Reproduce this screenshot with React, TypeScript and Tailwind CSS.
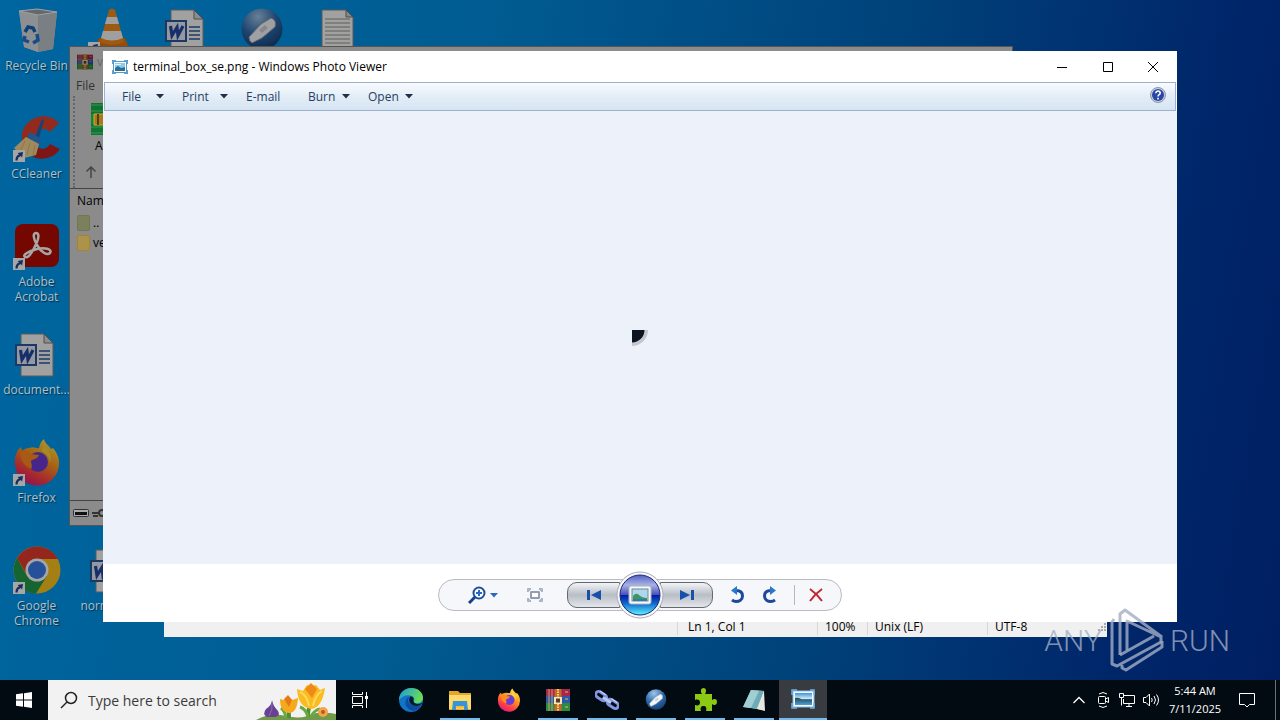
import type { ReactNode } from 'react';

const ShortcutBadge = () => (
  <svg viewBox="0 0 12 12" className="absolute bottom-0 left-0 size-3">
    <rect width="12" height="12" fill="#fff" />
    <path d="M2.5 10.5C2.3 7.5 3.6 5.4 6 4.6L4.6 3.1 10 2l-.9 5.4-1.4-1.3C5.7 6.8 4.8 8.2 4.6 10.5z" fill="#21478f" />
  </svg>
);

const DesktopIcon = ({ name, label, place, shortcut, children }: { name?: string; label?: string; place: string; shortcut?: boolean; children: ReactNode }) => (
  <button aria-label={name} className={`${place} flex flex-col items-center gap-1 pt-1.5 pr-0.5`}>
    <span className="relative block size-12 brightness-[0.65]">
      {children}
      {shortcut && <ShortcutBadge />}
    </span>
    {label && <span className="w-[70px] text-center text-[12px] leading-[15px] text-[#adc0cc] [text-shadow:1px_1px_1px_#00304a]">{label}</span>}
  </button>
);

const RecycleBin = () => (
  <svg viewBox="0 0 48 48" className="size-12">
    <path d="M6 5l18-2 20 3-4 37-15 3-14-5z" fill="#cfd4da" />
    <path d="M6 5l19 4v37l-14-5z" fill="#d9dde2" />
    <path d="M25 9l19-3-4 37-15 3z" fill="#bcc3ca" />
    <path d="M6 5l18-2 20 3-19 3z" fill="#9aa2aa" stroke="#f4f6f8" />
    <path d="M12 26l3-5 5 1 2 4" fill="none" stroke="#1763b5" strokeWidth="3.500" />
    <path d="M24 28l1 6-5 3M16 36l-5-2 1-4" fill="none" stroke="#2377cf" strokeWidth="3.500" />
  </svg>
);

const VlcCone = () => (
  <svg viewBox="0 0 48 48" className="size-12">
    <path d="M11 32h26l4 10H7z" fill="#e87404" />
    <path d="M21 4q3-3 6 0l9 32q-12 6-24 0z" fill="#f28a1c" />
    <path d="M19 11h10l2 7H17zM15 25h18l2 7q-11 5-22 0z" fill="#f4f4f4" />
  </svg>
);

const WordDoc = () => (
  <svg viewBox="2 -2 48 48" className="size-12">
    <path d="M10 2h23l9 9v33H10z" fill="#f8f8f8" stroke="#8b8b8b" />
    <path d="M33 2v9h9z" fill="#d8d8d8" stroke="#777" />
    <path d="M28 19h11M28 23h11M28 27h11M28 31h11" stroke="#2b579a" strokeWidth="1.5" />
    <rect x="5" y="13" width="20" height="20" fill="#e4ebf7" stroke="#2b579a" strokeWidth="2" />
    <path d="M9.500 18l1.500 9.500 5-8 1 8 5-9.500" fill="none" stroke="#2447a0" strokeWidth="3.200" />
  </svg>
);

const UsbDisc = ({ className }: { className: string }) => (
  <svg viewBox="0 0 48 48" className={className}>
    <defs>
      <radialGradient id="disc" cx=".4" cy=".2" r=".9">
        <stop offset="0" stopColor="#9fc4e8" />
        <stop offset=".5" stopColor="#2d6aac" />
        <stop offset="1" stopColor="#123869" />
      </radialGradient>
    </defs>
    <circle cx="24" cy="23" r="20.500" fill="url(#disc)" />
    <path d="M11 31l12-13 10-6q6 2 4 9L24 32l-10 5q-3-2-3-6z" fill="#f4f6f8" stroke="#8a98aa" />
    <path d="M21 24l6-5 3 3-6 5z" fill="#ccd3dc" />
  </svg>
);

const TextDoc = () => (
  <svg viewBox="0 -1 48 48" className="size-12">
    <path d="M9 3h24l7 7v35H9z" fill="#f8f8f6" stroke="#888" />
    <path d="M33 3v7h7z" fill="#d0d0d0" stroke="#777" />
    <path d="M12 12h25M12 16h25M12 20h25M12 24h25M12 28h25M12 32h25M12 36h25" stroke="#8f8f8f" />
  </svg>
);

const CCleaner = () => (
  <svg viewBox="0 0 48 48" className="size-12">
    <path d="M46 9C36-2 18 1 11 14c-4 8-2 14 1 20l12-2c-4-6-3-13 3-16 4-2 7-1 10 2z" fill="#e1402c" />
    <path d="M20 43c10 4 21 1 27-8l-10-5c-3 5-8 6-13 3z" fill="#c42222" />
    <path d="M29 5l2 1-5 18-4-1z" fill="#1f66bb" />
    <path d="M17 18l12 7-3 5-12-6z" fill="#2f83d6" />
    <path d="M13 23l13 7-3 11-12 3L1 34z" fill="#f5d492" />
    <path d="M12 27l-5 10M17 29l-3 12M22 31l-2 11" stroke="#dfb46b" />
  </svg>
);

const Acrobat = () => (
  <svg viewBox="0 0 48 48" className="size-12">
    <rect x="2" y="2" width="44" height="43" rx="8" fill="#b30b00" />
    <path d="M23 11c-4 0-2 7 1 12 4 7 10 11 13 8 3-4-6-6-13-4-8 2-15 6-12 8 4 2 9-8 12-15 2-5 2-9-1-9z" fill="none" stroke="#fff" strokeWidth="2.500" />
  </svg>
);

const FirefoxLogo = ({ className }: { className: string }) => (
  <svg viewBox="0 0 48 48" className={className}>
    <defs>
      <linearGradient id="fox" x1=".8" y1="0" x2=".25" y2="1">
        <stop offset="0" stopColor="#fff04a" />
        <stop offset=".4" stopColor="#ff9a1e" />
        <stop offset=".75" stopColor="#ff3d48" />
        <stop offset="1" stopColor="#e3157f" />
      </linearGradient>
    </defs>
    <path d="M31 1c1 5 5 6 7 10l2-1c4 5 6 9 6 15a22 22 0 0 1-44 1C1 18 4 12 8 9l1 4c2-2 4-3 7-3 5-2 7 1 10 0 1-4 2-7 5-9z" fill="url(#fox)" />
    <circle cx="25" cy="24" r="10" fill="#6b3bd6" />
    <path d="M7 13c6-2 9 1 10 3l9 1c-1 4-6 4-8 6 0 3 2 5 0 8-8-4-11-10-11-18z" fill="#ff8a1f" />
    <path d="M32 8c5 6 7 11 5 17 0-7-4-9-8-12 0-2 1-4 3-5z" fill="#ffd53c" />
  </svg>
);

const ChromeLogo = () => (
  <svg viewBox="0 0 48 48" className="size-12">
    <circle cx="24" cy="24" r="23.500" fill="#fcc31e" />
    <path d="M4 12A23.500 23.500 0 0 1 45 13H24L14 29z" fill="#e33b2e" />
    <path d="M4 12a23.500 23.500 0 0 0 19 35.500L34 30H14z" fill="#229a48" />
    <circle cx="24" cy="24" r="11.500" fill="#fff" />
    <circle cx="24" cy="24" r="9" fill="#3b7ded" />
  </svg>
);

const WinrarLogo = ({ className }: { className: string }) => (
  <svg viewBox="0 0 24 24" className={className}>
    <path d="M0 1h24v7H0z" fill="#a8254c" />
    <path d="M0 8h24v7H0z" fill="#3158a8" />
    <path d="M0 15h24v8H0z" fill="#2c8a42" />
    <path d="M3 1v22M6 1v22" stroke="#c9a56c" />
    <path d="M8.500 1h7v22h-7z" fill="#c8692b" />
    <path d="M8 9h8v7H8z" fill="#f3e6ba" />
    <path d="M10 10.500h4v4h-4z" fill="#5b3a24" />
    <path d="M12 1v8M12 16v7" stroke="#f4d66c" strokeWidth="2" strokeDasharray="1.500 1" />
    <path d="M19 4h3M19 11h3M19 19h3" stroke="#e4bb5d" />
  </svg>
);

const PictureIcon = ({ className }: { className: string }) => (
  <svg viewBox="0 0 16 14" className={className}>
    <rect x="1.500" y="1.500" width="13" height="11" fill="#fff" stroke="#5896c8" />
    <rect x="3" y="3" width="10" height="8" fill="#8ccbee" />
    <path d="M3 8l3-2 3 2 4-1v4H3z" fill="#287093" />
    <path d="M3 4h6v1H3z" fill="#dff3fc" />
    <path d="M0 4V0h4M12 0h4v4M16 10v4h-4M4 14H0v-4" fill="none" stroke="#3985c1" strokeWidth="1.500" />
  </svg>
);

const PhotoLogo = () => (
  <svg viewBox="0 0 24 24" className="size-6">
    <defs>
      <linearGradient id="sea" x1="0" y1="0" x2="0" y2="1">
        <stop offset="0" stopColor="#3d94d6" />
        <stop offset=".5" stopColor="#d8effa" />
        <stop offset=".55" stopColor="#28597a" />
        <stop offset="1" stopColor="#4da3cf" />
      </linearGradient>
    </defs>
    <path d="M2 3h21v16H2z" fill="#f2f8fc" stroke="#8bbfe4" />
    <path d="M4 5h17v12H4z" fill="url(#sea)" />
    <path d="M4 10q4-1 7 1.500H4z" fill="#2c5140" />
    <path d="M1 7V2h5M19 2h4v5M23 15v5h-4M6 20H1v-5" fill="none" stroke="#70b3e4" strokeWidth="1.500" />
  </svg>
);

const Caret = () => (
  <svg viewBox="0 0 8 5" className="h-[5px] w-2">
    <path d="M0 0h8L4 4.500z" fill="#1e2f4a" />
  </svg>
);

const menus = [
  { label: 'File', width: 'w-[60px]', caret: true },
  { label: 'Print', width: 'w-[64px]', caret: true },
  { label: 'E-mail', width: 'w-[62px]', caret: false },
  { label: 'Burn', width: 'w-[60px]', caret: true },
  { label: 'Open', width: 'w-[63px]', caret: true },
];

const ArchiveWindow = () => (
  <section className="absolute top-[46px] right-[267px] left-[69px] flex h-[480px] flex-col border border-[#555] bg-[#8b8b8b] text-[12px] text-black">
    <header className="flex h-[29px] items-center gap-1 px-[7px] text-[#666]">
      <WinrarLogo className="size-4 brightness-[0.6]" />
      <span>v</span>
    </header>
    <div className="flex h-5 items-center px-1.5 text-[#333]">
      <button>File</button>
    </div>
    <div className="ml-[3px] flex h-[92px] flex-col border-l-2 border-dotted border-[#666] pt-1.5 pl-4">
      <svg viewBox="0 0 32 34" className="h-[34px] w-8 shrink-0">
        <path d="M0 1h28v11H0z" fill="#117032" />
        <path d="M0 12h28v10H0z" fill="#0b8b37" />
        <path d="M0 22h28v11H0z" fill="#127533" />
        <path d="M0 3h28M0 9h28M0 25h28M0 31h28" stroke="#2c9e4c" />
        <path d="M3 12h10v11H3z" fill="#a67a1d" stroke="#d6a837" />
        <path d="M7 12v11" stroke="#533d0d" strokeWidth="2" />
      </svg>
      <span className="pl-1 leading-5">A</span>
      <svg viewBox="0 0 12 12" className="mt-2.5 -ml-1.5 size-3 shrink-0">
        <path d="M6 12V1M1.500 5.500L6 1l4.500 4.500" fill="none" stroke="#444" strokeWidth="1.500" />
      </svg>
    </div>
    <div className="flex-1 border-y border-[#444]">
      <table className="text-left leading-5">
        <thead>
          <tr><th className="h-6 px-[7px] font-normal">Name</th></tr>
        </thead>
        <tbody>
          <tr><td className="flex items-center gap-[3px] px-[7px]"><span className="h-4 w-[13px] rounded-xs border border-[#737650] bg-[#7d805c]" />..</td></tr>
          <tr><td className="flex items-center gap-[3px] px-[7px]"><span className="h-4 w-[13px] rounded-xs border border-[#a28434] bg-[#ad924b]" />ve</td></tr>
        </tbody>
      </table>
    </div>
    <footer className="flex h-6 items-center gap-1 px-[3px]">
      <svg viewBox="0 0 34 10" className="h-2.5 w-[34px]">
        <rect x=".5" y="1.500" width="15" height="7" rx="1" fill="#aaa" stroke="#333" />
        <path d="M2 4h12v3H2z" fill="#111" />
        <path d="M19 5h8M20 8h5" stroke="#333" strokeWidth="2" />
        <circle cx="29" cy="5" r="3" fill="none" stroke="#333" strokeWidth="2" />
      </svg>
    </footer>
  </section>
);

const NotepadWindow = () => (
  <section className="absolute right-[173px] bottom-[43px] left-[164px] flex h-[200px] flex-col justify-end bg-[#f0f0f0] text-[12px] text-black">
    <footer className="flex h-5 items-center justify-end leading-4">
      <span className="h-4 w-[140px] border-l border-[#d7d7d7] pl-2.5">Ln 1, Col 1</span>
      <span className="h-4 w-[50px] border-l border-[#d7d7d7] pl-[7px]">100%</span>
      <span className="h-4 w-[120px] border-l border-[#d7d7d7] pl-[7px]">Unix (LF)</span>
      <span className="flex h-4 w-[120px] items-center justify-between border-l border-[#d7d7d7] pl-[7px]">
        UTF-8
        <svg viewBox="0 0 10 10" className="size-2.5">
          <path d="M8 1v9M5 4v6M2 7v3" stroke="#aaa" strokeWidth="2" strokeDasharray="2 1" />
        </svg>
      </span>
    </footer>
  </section>
);

const ViewerControls = () => (
  <div className="flex h-[58px] items-center justify-center bg-white pt-1">
    <div className="flex h-8 w-[404px] items-center rounded-full border border-[#b9bbc0] bg-[#f5f7fa]">
      <button aria-label="Zoom" className="ml-[29px] flex w-[30px] items-center gap-1">
        <svg viewBox="0 0 18 18" className="size-[18px]">
          <circle cx="11" cy="7" r="5.500" fill="#fff" stroke="#1f4e9f" strokeWidth="2" />
          <path d="M11 4v6M8 7h6" stroke="#2469bd" strokeWidth="2" />
          <path d="M7 11l-6 6" stroke="#1b3f85" strokeWidth="3" />
        </svg>
        <svg viewBox="0 0 8 5" className="h-[5px] w-2"><path d="M0 0h8L4 4.500z" fill="#2e68b5" /></svg>
      </button>
      <button aria-label="Fit to window" className="ml-[29px]">
        <svg viewBox="0 0 16 14" className="h-3.5 w-4">
          <path d="M1 4V1h3M12 1h3v3M15 10v3h-3M4 13H1v-3" fill="none" stroke="#929eb2" strokeWidth="1.500" />
          <rect x="4" y="4" width="8" height="6" fill="#fff" stroke="#929eb2" strokeWidth="2" />
          <path d="M1 1l3 3M15 1l-3 3M1 13l3-3M15 13l-3-3" stroke="#b2bccb" />
        </svg>
      </button>
      <div className="ml-6 flex items-center">
        <button aria-label="Previous" className="-mr-1 flex h-[26px] w-[53px] items-center justify-center rounded-l-[10px] border border-[#65686e] bg-linear-to-b from-[#f2f4f7] from-0% via-[#b9bec6] via-50% to-[#e3e6ea]">
          <svg viewBox="0 0 16 12" className="h-3 w-4"><path d="M1 1h3v10H1zM15 1v10L5 6z" fill="#1751ab" /></svg>
        </button>
        <button aria-label="Play slide show" className="relative -my-2">
          <svg viewBox="0 0 48 48" className="size-12">
            <defs>
              <linearGradient id="orb" x1="0" y1="0" x2="0" y2="1">
                <stop offset="0" stopColor="#5260c4" />
                <stop offset=".25" stopColor="#a8b2e6" />
                <stop offset=".49" stopColor="#4651bb" />
                <stop offset=".5" stopColor="#0716a0" />
                <stop offset=".7" stopColor="#0965cc" />
                <stop offset="1" stopColor="#63f3ff" />
              </linearGradient>
            </defs>
            <circle cx="24" cy="24" r="23" fill="#f8f8fc" stroke="#a9abb6" />
            <circle cx="24" cy="24" r="20" fill="url(#orb)" stroke="#1d2878" />
            <rect x="13" y="15" width="22" height="18" rx="2" fill="#f7f7f4" stroke="#aeb4c2" />
            <rect x="16" y="18" width="16" height="12" fill="#aad8ee" stroke="#72889c" />
            <path d="M17 25q3-4 6-1t8 3v2H17z" fill="#42945a" />
            <path d="M17 28h14v2H17z" fill="#2e7caa" />
          </svg>
        </button>
        <button aria-label="Next" className="-ml-1 flex h-[26px] w-[53px] items-center justify-center rounded-r-[10px] border border-[#65686e] bg-linear-to-b from-[#f2f4f7] from-0% via-[#b9bec6] via-50% to-[#e3e6ea]">
          <svg viewBox="0 0 16 12" className="h-3 w-4"><path d="M12 1h3v10h-3zM1 1v10l10-5z" fill="#1751ab" /></svg>
        </button>
      </div>
      <button aria-label="Rotate counterclockwise" className="ml-4">
        <svg viewBox="0 0 16 18" className="h-[18px] w-4">
          <path d="M7 4.500c4 0 6.500 1.500 6.500 5.500S10 15.500 7 15.500q-2 0-4-1.500" fill="none" stroke="#1d489b" strokeWidth="3" />
          <path d="M8 0v9L2 4.500z" fill="#2b77ca" />
        </svg>
      </button>
      <button aria-label="Rotate clockwise" className="ml-[17px]">
        <svg viewBox="0 0 16 18" className="h-[18px] w-4">
          <path d="M9 4.500c-4 0-6.500 1.500-6.500 5.500S6 15.500 9 15.500q2 0 4-1.500" fill="none" stroke="#1d489b" strokeWidth="3" />
          <path d="M8 0v9l6-4.500z" fill="#2b77ca" />
        </svg>
      </button>
      <span className="ml-4 h-5 w-px bg-[#b5b8be]" />
      <button aria-label="Delete" className="ml-3.5">
        <svg viewBox="0 0 14 14" className="size-3.5"><path d="M1 1q7 5 12 12M13 1Q6 6 1 13" fill="none" stroke="#c0272d" strokeWidth="2" /></svg>
      </button>
    </div>
  </div>
);

const PhotoViewer = () => (
  <section className="absolute inset-x-[103px] top-[51px] bottom-[58px] flex flex-col bg-white text-black">
    <header className="flex h-[31px] shrink-0 items-center pl-[9px]">
      <PictureIcon className="h-3.5 w-4" />
      <h1 className="ml-[5px] flex-1 text-[12px]">terminal_box_se.png - Windows Photo Viewer</h1>
      <button aria-label="Minimize" className="flex w-[46px] justify-center"><svg viewBox="0 0 10 10" className="size-2.5"><path d="M0 5.500h10" stroke="#000" /></svg></button>
      <button aria-label="Maximize" className="flex w-[45px] justify-center"><svg viewBox="0 0 10 10" className="size-2.5"><path d="M.5.5h9v9h-9z" fill="none" stroke="#000" /></svg></button>
      <button aria-label="Close" className="mr-px flex w-[46px] justify-center"><svg viewBox="0 0 10 10" className="size-2.5"><path d="M0 0l10 10M10 0L0 10" stroke="#000" /></svg></button>
    </header>
    <nav className="mx-px flex h-[29px] shrink-0 items-center border border-[#9db0cc] bg-linear-to-b from-[#f8fbfe] from-0% via-[#e3edf7] via-50% to-[#d6e5f3] pl-[9px] text-[12px] text-[#27405f]">
      {menus.map((m) => (
        <button key={m.label} className={`${m.width} flex items-center justify-between pr-2.5 pl-2`}>
          {m.label}
          {m.caret && <Caret />}
        </button>
      ))}
      <button aria-label="Help" className="mr-[9px] mb-1 ml-auto">
        <svg viewBox="0 0 16 16" className="size-4">
          <circle cx="8" cy="8" r="7.500" fill="#c8cfdf" stroke="#8b95ad" />
          <circle cx="8" cy="8" r="6" fill="#2947a6" />
          <path d="M5.800 6.200c0-3 4.600-2.800 4.400-.1C10.100 7.700 8 7.500 8 9.400M8 10.800v1.600" fill="none" stroke="#fff" strokeWidth="1.600" />
        </svg>
      </button>
    </nav>
    <div className="flex flex-1 items-center justify-center bg-[#edf1f9]">
      <svg viewBox="0 0 16 16" className="size-4">
        <path d="M0 0h16A16 16 0 0 1 0 16z" fill="#c3c7ce" />
        <path d="M0 0h12.500A12.500 12.500 0 0 1 0 12.500z" fill="#0b1420" />
      </svg>
    </div>
    <ViewerControls />
  </section>
);

const Watermark = () => (
  <div className="absolute right-[50px] bottom-2 flex h-16 items-center gap-[3px] font-['Roboto','Liberation_Sans',sans-serif] text-[30px] font-light text-[#a3aec5]/80">
    <span>ANY</span>
    <svg viewBox="0 0 62 64" className="h-16 w-[62px]" fill="none" stroke="currentColor" strokeWidth="3" strokeLinejoin="round">
      <path d="M15 47V6l5-4 37 27M9 11l-2 3v42l5 2 44-24v-5L22 13v29" />
      <path d="M15 47l34-19M17 57v3l4 2 36-23v-6" />
    </svg>
    <span>RUN</span>
  </div>
);

const Flowers = () => (
  <svg viewBox="0 0 80 40" className="h-10 w-20 shrink-0">
    <path d="M0 40Q14 32 30 36t30-3q12-1 20 1v6z" fill="#719a4b" />
    <path d="M16 20q1 6 6 11 3 5-3 6h-8q-5-3-1-8 6-4 6-9z" fill="#674293" />
    <path d="M16 22q1 8-3 14" stroke="#8d6ab5" fill="none" />
    <path d="M33 38q0-8-2-10M52 37q0-8 2-11" stroke="#4e8e38" strokeWidth="4" fill="none" />
    <path d="M30 38q-1-7-5-10M52 37Q50 29 44 27M55 36q5-7 9-7" stroke="#6ba83e" strokeWidth="3" fill="none" />
    <path d="M24 19l4 1 4-4 4 4 6-2q-1 15-9 15-9-1-9-14z" fill="#f6a91c" />
    <path d="M28 19l4-4 4 5-3 7z" fill="#e87a16" />
    <path d="M41 9l6 2 4-6 5 1 4-1 4 5 5-2q-3 20-14 21Q42 27 41 9z" fill="#fbbb20" />
    <path d="M49 9l6-6 6 6-5 9z" fill="#ef8a16" />
    <path d="M44 12q7 3 9 14M66 11q-7 4-9 15" stroke="#fddb5d" strokeWidth="2" fill="none" />
    <circle cx="67" cy="32" r="5" fill="#f3a54a" /><circle cx="67" cy="32" r="2" fill="#b85c1d" />
  </svg>
);

const EdgeLogo = () => (
  <svg viewBox="0 0 24 24" className="size-6">
    <defs>
      <linearGradient id="edge" x1="0" y1="0" x2="1" y2=".3">
        <stop offset="0" stopColor="#1a9bdc" /><stop offset="1" stopColor="#67dc58" />
      </linearGradient>
    </defs>
    <circle cx="12" cy="12" r="12" fill="#1174c9" />
    <path d="M0 12C0 4 7 0 12 0c8 0 12 5 12 10 0 4-4 6-8 5-3-1 0-2-1-5-2-4-11-4-15 2z" fill="url(#edge)" />
    <path d="M8 10c-4 6 0 12 7 13 3-1 6-3 8-7-6 3-14 1-14-4 0-1 0-2 2-3-1 0-2 0-3 1z" fill="#0c4da0" />
    <path d="M11 9c-3 5 2 9 7 9l5-2c1 0 1 0 .500-1-5 2-10 1-9-4 0-2-2-3-3.500-2z" fill="#061a29" />
  </svg>
);

const ExplorerLogo = () => (
  <svg viewBox="0 0 24 24" className="size-6">
    <path d="M1 3h9l2 2h11v17H1z" fill="#e5a42e" />
    <path d="M1 7h22v14H1z" fill="#ffd96a" />
    <path d="M5 13h14l1 9h-4v-4H8v4H4z" fill="#3994d5" />
    <path d="M8 18h8v2h-3v2h-2v-2H8z" fill="#f6bd3a" />
  </svg>
);

const ChainLogo = () => (
  <svg viewBox="0 0 24 24" className="size-6" fill="none">
    <g transform="rotate(34 12 12)">
      <rect x="-1" y="9" width="12" height="6" rx="3" stroke="#7f96e0" strokeWidth="3" />
      <rect x="13" y="9" width="12" height="6" rx="3" stroke="#7f96e0" strokeWidth="3" />
      <path d="M7 12h10" stroke="#b8c7f7" strokeWidth="3" />
      <path d="M1 8.500h7M15 8.500h7" stroke="#ced9ff" />
    </g>
  </svg>
);

const PuzzleLogo = () => (
  <svg viewBox="0 0 24 24" className="size-6">
    <path d="M2 6h7c-2-3-1-6 1.500-6S14 3 12 6h7v6c3-2 5-1 5 2s-3 4-5 2v7h-6c1-3 0-5-2.500-5S7 20 8 23H2v-6c3 1 5 0 5-2.500S5 11 2 12z" fill="#8cc914" />
  </svg>
);

const NotepadLogo = () => (
  <svg viewBox="0 0 24 24" className="size-6">
    <path d="M9 2l13 1-1 19-17-3z" fill="#bae1e5" />
    <path d="M9 2l13 1-7 18-14-2z" fill="#6eabb6" />
    <path d="M9 2l8 1-8 17-8-1z" fill="#a1ced3" />
    <path d="M22 3l1 20-8-2z" fill="#e7e7df" />
  </svg>
);

const tasks = [
  { name: 'Edge', icon: <EdgeLogo />, open: false },
  { name: 'File Explorer', icon: <ExplorerLogo />, open: true },
  { name: 'Firefox', icon: <FirefoxLogo className="size-6" />, open: false },
  { name: 'WinRAR', icon: <WinrarLogo className="size-6" />, open: true },
  { name: 'Links', icon: <ChainLogo />, open: true },
  { name: 'USB tool', icon: <UsbDisc className="size-6" />, open: true },
  { name: 'Extension', icon: <PuzzleLogo />, open: true },
  { name: 'Notepad', icon: <NotepadLogo />, open: true },
];

const Taskbar = () => (
  <footer className="flex h-10 shrink-0 items-stretch bg-[#030b12] text-white">
    <button aria-label="Start" className="flex w-12 items-center justify-center">
      <svg viewBox="0 0 16 16" className="size-4"><path d="M0 2.300l7-1v6.200H0zM8 1.200L16 0v7.500H8zM0 8.500h7v6.200l-7-1zM8 8.500h8V16l-8-1.200z" fill="#fff" /></svg>
    </button>
    <label className="flex w-72 items-center bg-[#f2f2f2] pl-3">
      <svg viewBox="0 0 18 18" className="size-[18px] shrink-0"><path d="M1 17l6-6" stroke="#222" strokeWidth="1.500" /><circle cx="11" cy="7" r="5.500" fill="none" stroke="#222" strokeWidth="1.500" /></svg>
      <input aria-label="Search" placeholder="Type here to search" className="ml-2.5 min-w-0 flex-1 bg-transparent text-[14px] outline-none placeholder:text-[#3b3b3b]" />
      <Flowers />
    </label>
    <button aria-label="Task view" className="mr-[3px] flex w-12 items-center justify-center">
      <svg viewBox="0 0 16 16" className="size-4" fill="none" stroke="#fff"><path d="M.5 0v2.500h10V0M.5 16v-2.500h10V16M.5 4.500h10v7H.5zM14.500 0v16" /><path d="M13 4h3v3h-3z" fill="#fff" stroke="none" /></svg>
    </button>
    <div className="flex gap-px">
      {tasks.map((t) => (
        <button key={t.name} aria-label={t.name} className="flex w-12 flex-col items-center justify-between pt-2">
          {t.icon}
          {t.open && <span className="h-0.5 w-10 bg-[#76b9ed]" />}
        </button>
      ))}
      <button aria-label="Photo Viewer" className="flex w-12 flex-col items-center justify-between bg-[#383b40] pt-2">
        <PhotoLogo />
        <span className="h-0.5 w-12 bg-[#76b9ed]" />
      </button>
    </div>
    <div className="ml-auto flex items-center">
      <div className="flex items-center gap-1.5">
        <button aria-label="Show hidden icons" className="flex w-[18px] justify-center"><svg viewBox="0 0 12 8" className="h-2 w-3"><path d="M.5 7L6 1.500 11.500 7" fill="none" stroke="#fff" strokeWidth="1.300" /></svg></button>
        <button aria-label="Meet now"><svg viewBox="0 0 18 18" className="size-[18px]" fill="none" stroke="#fff"><rect x="4.500" y="5.500" width="7" height="7" rx="1" /><path d="M11.500 8l3-1.500v5l-3-1.500M5 3q4-3 8 0M5 15q4 3 8 0" /></svg></button>
        <button aria-label="Network"><svg viewBox="0 0 18 18" className="size-[18px]" fill="none" stroke="#fff"><path d="M6 4.500h10.500v8h-11V8M1.500 2.500h4v4h-4zM3.500 7v7.500M8 15.500h6M11 13v2" /></svg></button>
        <button aria-label="Volume"><svg viewBox="0 0 18 18" className="size-[18px]" fill="none" stroke="#fff"><path d="M1.500 6.500H4L7.500 3v12L4 11.500H1.500zM9.500 7q1.500 2 0 4M12 5q3 4 0 8M14.500 3.500q4 5.500 0 11" /></svg></button>
      </div>
      <time className="w-[70px] text-center text-[11px] leading-[18px]">5:44 AM<br />7/11/2025</time>
      <button aria-label="Notifications" className="ml-2 flex w-[18px] justify-center"><svg viewBox="0 0 18 18" className="size-[18px]"><path d="M1.500 2.500h15v11h-5L9 16l-2.500-2.500h-5z" fill="none" stroke="#fff" /></svg></button>
      <span className="mr-1 ml-[19px] h-10 w-px bg-[#68717a]" />
    </div>
  </footer>
);

const App = () => (
  <div className="flex min-h-screen flex-col overflow-hidden bg-[#003a72] font-['Open_Sans','Noto_Sans',sans-serif]">
    <main className="relative min-h-[600px] flex-1 overflow-hidden bg-[linear-gradient(100deg,#0066a0_0%,#005c92_35%,#00427a_65%,#00266a_88%,#001f62_100%)]">
      <div className="grid auto-cols-[75px] grid-rows-[repeat(6,108px)]">
        <DesktopIcon label="Recycle Bin" place="col-start-1 row-start-1"><RecycleBin /></DesktopIcon>
        <DesktopIcon name="VLC" place="col-start-2 row-start-1" shortcut><VlcCone /></DesktopIcon>
        <DesktopIcon name="Word document" place="col-start-3 row-start-1"><WordDoc /></DesktopIcon>
        <DesktopIcon name="USB tool" place="col-start-4 row-start-1"><UsbDisc className="size-12" /></DesktopIcon>
        <DesktopIcon name="Text document" place="col-start-5 row-start-1"><TextDoc /></DesktopIcon>
        <DesktopIcon label="CCleaner" place="col-start-1 row-start-2" shortcut><CCleaner /></DesktopIcon>
        <DesktopIcon label="Adobe Acrobat" place="col-start-1 row-start-3" shortcut><Acrobat /></DesktopIcon>
        <DesktopIcon label="document..." place="col-start-1 row-start-4"><WordDoc /></DesktopIcon>
        <DesktopIcon label="Firefox" place="col-start-1 row-start-5" shortcut><FirefoxLogo className="size-12" /></DesktopIcon>
        <DesktopIcon label="Google Chrome" place="col-start-1 row-start-6" shortcut><ChromeLogo /></DesktopIcon>
        <DesktopIcon label="normalse..." place="col-start-2 row-start-6"><WordDoc /></DesktopIcon>
      </div>
      <NotepadWindow />
      <ArchiveWindow />
      <PhotoViewer />
      <Watermark />
    </main>
    <Taskbar />
  </div>
);

export default App;
